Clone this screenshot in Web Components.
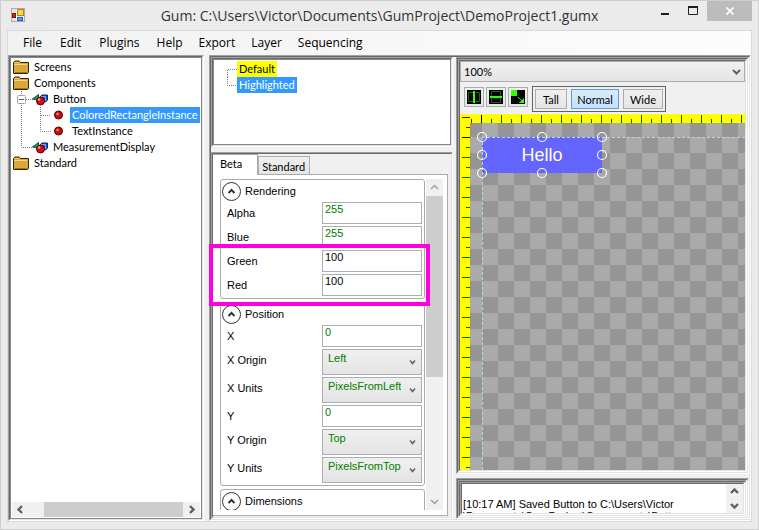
<!DOCTYPE html>
<html lang="en">
<head>
<meta charset="utf-8">
<title>Gum</title>
<style>
  html, body { height: 100%; }
  body { margin: 0; font: 11px/13px "Liberation Sans", Arial, sans-serif; color: #000; --ui: Lato, "Liberation Sans", sans-serif; }
</style>
</head>
<body>
<gum-app></gum-app>

<script>
const define = (name, css, html) => {
  const tpl = document.createElement('template');
  customElements.define(name, class extends HTMLElement {
    constructor() {
      super();
      const root = this.attachShadow({ mode: 'open' });
      tpl.innerHTML = `<style>*{box-sizing:border-box}button,input,select{font:inherit;color:inherit;margin:0;border-radius:0}${css}</style>` +
        (typeof html === 'function' ? '' : html);
      root.append(tpl.content.cloneNode(true));
    }
    connectedCallback() {
      if (this.ready) return;
      this.ready = true;
      if (typeof html === 'function') this.shadowRoot.innerHTML += html(this);
    }
  });
};
const attr = (el, name) => el.getAttribute(name) || '';

/* Sunken 3D edge, two pixels on each side */
define('sunken-frame', `
  :host { display: flex; min-width: 0; min-height: 0; border: 1px solid; border-color: #a0a0a0 #fff #fff #a0a0a0; }
  .in { flex: 1; display: flex; flex-direction: column; min-width: 0; min-height: 0; border: 1px solid; border-color: #696969 #e3e3e3 #e3e3e3 #696969; }
  ::slotted(*) { flex: 1; }
`, `<div class="in"><slot></slot></div>`);

define('title-bar', `
  :host { display: grid; grid-template-columns: 1fr auto 1fr; height: 30px; flex: none; background: #ebebeb; }
  .icon { margin: 7px 0 0 10px; }
  h1 { margin: 0; font: 14px/29px "Open Sans", "Noto Sans", sans-serif; color: #333; white-space: nowrap; }
  .ctl { display: flex; justify-content: flex-end; height: 20px; padding-right: 6px; }
  button { border: 0; padding: 0; background: none; width: 28px; display: grid; place-items: center; }
  button.close { width: 45px; background: #bcbcbc; }
  svg { display: block; }
`, `
  <svg class="icon" width="14" height="14">
    <rect x=".5" y=".5" width="13" height="13" fill="#e4e6ea" stroke="#aaa"/>
    <path d="M5.5 1V13M1 9.5H13" stroke="#fff"/>
    <rect x="6.5" y="1.500" width="6" height="6" fill="#ffd24a" stroke="#b8860b"/>
    <rect x="1.500" y="5.500" width="3" height="4" fill="#d42a1e" stroke="#8c1008"/>
    <rect x="6.500" y="9.500" width="5" height="3" fill="#5c9cff" stroke="#2a5fc4"/>
  </svg>
  <h1>Gum: C:\\Users\\Victor\\Documents\\GumProject\\DemoProject1.gumx</h1>
  <div class="ctl">
    <button aria-label="Minimize"><svg width="10" height="10"><path d="M1 8H9" stroke="#1e1e1e" stroke-width="2"/></svg></button>
    <button aria-label="Maximize"><svg width="10" height="10"><path d="M0 1H10" stroke="#1e1e1e" stroke-width="2"/><path d="M.5 1V8.500H9.500V1" fill="none" stroke="#1e1e1e"/></svg></button>
    <button class="close" aria-label="Close"><svg width="8" height="8"><path d="M.5.5L7.500 7.500M7.500.5L.5 7.500" stroke="#fff" stroke-width="1.600"/></svg></button>
  </div>
`);

define('menu-bar', `
  :host { display: flex; flex: none; height: 24px; padding-left: 6px; background: linear-gradient(90deg, #f1f1f1, #fdfdfd); }
  button { border: 0; background: none; padding: 0 9px; font: 12px/22px "Open Sans", "Noto Sans", sans-serif; }
  button:nth-child(n+5) { padding: 0 8px; }
`, `${['File', 'Edit', 'Plugins', 'Help', 'Export', 'Layer', 'Sequencing'].map(t => `<button>${t}</button>`).join('')}`);

const parts = {
  folder: `<path d="M1.500 14.500V3.500L3 2H7L8.500 3.500H16.500V13.500L15.500 14.500Z" fill="#d9a83a" stroke="#3a2204"/><path d="M2 5.500H15" stroke="#f6d67a"/><path d="M3 3.500H7" stroke="#f0c860"/><path d="M3 13.500H15.500" stroke="#a66d14"/>`,
  shapes: `<path d="M20.500 8L26.500 3.500V9Z" fill="#1fa074" stroke="#0c4a38"/><path d="M28.500 5.500L30 4H35.500V9L33.500 11H28.500Z" fill="#1b5fd6" stroke="#0a1f66"/><path d="M29 5.500H33.500V10" stroke="#6aa5ff" fill="none"/><circle cx="28.500" cy="10" r="4" fill="#d01010" stroke="#4d0000"/><circle cx="27" cy="8.500" r="1.200" fill="#ff9a9a"/>`,
  gem: `<circle cx="46.500" cy="8" r="4" fill="#c40f0f" stroke="#500000"/><circle cx="45.500" cy="7" r="1.200" fill="#ff8a8a"/>`
};
const dots = d => `<path d="${d}" stroke="#808080" stroke-dasharray="1 1" fill="none"/>`;
const art = {
  folder: [20, parts.folder],
  component: [39, dots('M9.500 0V16M14 8.500H21') + `<rect x="5.500" y="4.500" width="8" height="8" rx="1" fill="#fff" stroke="#a0a0a0"/><path d="M7 8.500H12" stroke="#3b5aa5"/>` + parts.shapes],
  last: [39, dots('M9.500 0V8.500H21') + parts.shapes],
  member: [58, dots('M9.500 0V16M28.500 0V16M29 8.500H39') + parts.gem],
  memberlast: [58, dots('M9.500 0V16M28.500 0V8.500H39') + parts.gem],
  state: [23, dots('M13.500 16V8.500H23')],
  statelast: [23, dots('M13.500 0V8.500H23')]
};
define('tree-row', `
  :host { display: flex; height: 16px; font: 11px/16px var(--ui); }
  svg { flex: none; display: block; }
  span { padding: 0 2px; white-space: nowrap; }
  :host([selected]) span { background: #3399ff; color: #fff; }
  :host([marked]) span { background: #ff0; }
`, el => {
  const [w, s] = art[attr(el, 'kind')];
  return `<svg width="${w}" height="16" aria-hidden="true">${s}</svg><span role="treeitem"><slot></slot></span>`;
});

const chev = {
  up: 'M1 6L4.500 2.500L8 6', down: 'M1 3L4.500 6.500L8 3',
  left: 'M6 1L2.500 4.500L6 8', right: 'M3 1L6.500 4.500L3 8',
  small: 'M2 3.500L4.500 6.500L7 3.500', toggle: 'M1.500 6L4.500 3L7.500 6'
};
const arrow = (dir, color, w = 2) => `<svg width="9" height="9"><path d="${chev[dir]}" fill="none" stroke="${color}" stroke-width="${w}"/></svg>`;

/* Scroll bar: start / thumb / end are flex shares of the track */
define('scroll-bar', `
  :host { display: flex; flex: none; min-height: 0; background: #f0f0f0; }
  :host([vertical]) { flex-direction: column; width: 17px; }
  :host(:not([vertical])) { height: 15px; }
  button { border: 0; padding: 0; background: none; display: grid; place-items: center; flex: 0 1 17px; min-height: 0; }
  i { background: #cdcdcd; }
  svg { display: block; }
`, el => {
  const v = el.hasAttribute('vertical');
  const [a, t, b] = attr(el, 'track').split(' ');
  const c = attr(el, 'tone') || '#606060', w = c === '#606060' ? 2.4 : 1.5;
  return `<button aria-label="Back">${arrow(v ? 'up' : 'left', c, w)}</button><b style="flex:${a}"></b><i style="flex:${t}"></i><b style="flex:${b}"></b><button aria-label="Forward">${arrow(v ? 'down' : 'right', c, w)}</button>`;
});

define('project-tree', `
  :host { display: flex; flex-direction: column; min-height: 0; border: 1px solid #828790; background: #fff; padding: 1px; }
  .rows { flex: 1; min-height: 0; overflow: hidden; }
`, `
  <div class="rows" role="tree">
    <tree-row kind="folder">Screens</tree-row>
    <tree-row kind="folder">Components</tree-row>
    <tree-row kind="component">Button</tree-row>
    <tree-row kind="member" selected>ColoredRectangleInstance</tree-row>
    <tree-row kind="memberlast">TextInstance</tree-row>
    <tree-row kind="last">MeasurementDisplay</tree-row>
    <tree-row kind="folder">Standard</tree-row>
  </div>
  <scroll-bar track="15 139 0"></scroll-bar>
`);

define('state-list', `
  :host { display: block; border: 1px solid #828790; background: #fff; padding: 1px 0; overflow: hidden; }
`, `
  <div role="tree">
    <tree-row kind="state" marked>Default</tree-row>
    <tree-row kind="statelast" selected>Highlighted</tree-row>
  </div>
`);

define('prop-row', `
  :host { display: grid; grid-template-columns: 95fr 100fr; align-items: center; color: #000; }
  .field { position: relative; display: block; color: #008000; }
  :host([edited]) .field { color: #000; }
  :host([choice]) label { padding-bottom: 4px; }
  input, select { display: block; width: 100%; border: 1px solid #abadb3; line-height: 13px; outline: 0; }
  input { height: 22px; padding: 0 2px 8px; background: #fff; }
  select { appearance: none; height: 26px; padding: 0 20px 8px 5px; background: linear-gradient(#f0f0f0, #e4e4e4); overflow: hidden; text-overflow: clip; }
  svg { position: absolute; right: 5px; top: 8px; pointer-events: none; }
`, el => {
  const v = attr(el, 'value');
  return `<label for="f">${attr(el, 'label')}</label><span class="field">` +
    (el.hasAttribute('choice')
      ? `<select id="f"><option>${v}</option></select>${arrow('small', '#606060', 1.5)}`
      : `<input id="f" value="${v}">`) + `</span>`;
});

define('prop-group', `
  :host { display: block; border: 1px solid #a9abb0; border-radius: 3px; padding: 0 2px 2px 6px; background: #fff; }
  header { display: flex; align-items: center; gap: 4px; height: 22px; margin-left: -5px; }
  button { width: 19px; height: 19px; padding: 0; border: 1px solid #333; border-radius: 50%; background: #fff; display: grid; place-items: center; }
  .rows { display: grid; gap: 2px; }
  svg { display: block; }
`, el => `<header><button aria-label="Toggle ${attr(el, 'name')}">${arrow('toggle', '#333', 2)}</button><span>${attr(el, 'name')}</span></header><div class="rows"><slot></slot></div>`);

define('property-panel', `
  :host { display: flex; flex-direction: column; min-height: 0; position: relative; background: #f0f0f0; padding-right: 3px; }
  .tabs { display: flex; align-items: flex-end; height: 20px; flex: none; font-family: var(--ui); }
  .tabs button { border: 1px solid #acacac; border-bottom: 0; background: linear-gradient(#f0f0f0, #e5e5e5); height: 18px; padding: 1px 4px 0 3px; }
  .tabs button.on { background: #fff; height: 21px; margin-bottom: -1px; padding: 0 15px 3px 7px; border-left: 0; z-index: 1; }
  .page { flex: 1; min-height: 0; display: flex; border: 1px solid #acacac; border-left: 0; background: #fff; padding: 4px 4px 5px 7px; margin-bottom: 1px; }
  .list { flex: 1; min-width: 0; overflow: hidden; display: flex; flex-direction: column; gap: 3px; padding-right: 1px; }
  .list > * { flex: none; }
  .list > :last-child { min-height: 60px; }
  .callout { position: absolute; left: -4px; top: 90px; width: calc(100% - 17px); height: 62px; border: 4px solid #ff00dc; pointer-events: none; }
`, `
  <div class="tabs" role="tablist"><button class="on" role="tab">Beta</button><button role="tab">Standard</button></div>
  <div class="page">
    <div class="list">
      <prop-group name="Rendering">
        <prop-row label="Alpha" value="255"></prop-row>
        <prop-row label="Blue" value="255"></prop-row>
        <prop-row label="Green" value="100" edited></prop-row>
        <prop-row label="Red" value="100" edited></prop-row>
      </prop-group>
      <prop-group name="Position">
        <prop-row label="X" value="0"></prop-row>
        <prop-row label="X Origin" value="Left" choice></prop-row>
        <prop-row label="X Units" value="PixelsFromLeft" choice></prop-row>
        <prop-row label="Y" value="0"></prop-row>
        <prop-row label="Y Origin" value="Top" choice></prop-row>
        <prop-row label="Y Units" value="PixelsFromTop" choice></prop-row>
      </prop-group>
      <prop-group name="Dimensions"></prop-group>
    </div>
    <scroll-bar vertical track="0 182 117" tone="#a0a0a0"></scroll-bar>
  </div>
  <div class="callout"></div>
`);

define('zoom-select', `
  :host { display: block; position: relative; flex: none; font-family: var(--ui); }
  select { appearance: none; display: block; width: 100%; height: 21px; border: 1px solid #acacac; padding: 0 20px 0 3px; background: linear-gradient(#f0f0f0, #e5e5e5); }
  svg { position: absolute; right: 4px; top: 6px; pointer-events: none; }
`, `<select aria-label="Zoom"><option>100%</option></select>${arrow('down', '#606060', 2)}`);

define('canvas-tools', `
  :host { display: flex; flex: none; height: 32px; padding: 4px 4px 2px; gap: 2px; background: #f0f0f0; font-family: var(--ui); }
  button { border: 1px solid #acacac; background: linear-gradient(#f0f0f0, #e5e5e5); padding: 0; }
  .ic { width: 20px; height: 20px; margin-top: 1px; display: grid; place-items: center; }
  .ic svg { display: block; background: #000; }
  .sizes { display: flex; gap: 4px; border: 1px solid #646464; height: 26px; padding: 2px; margin-left: 2px; }
  .sizes button { padding: 0 3px; flex: 0 0 32px; }
  .sizes button:last-child { flex-basis: 40px; }
  .sizes button.on { flex-basis: 48px; border-color: #569de5; background: linear-gradient(#dbecfc, #c4e0fc); }
`, `
  <button class="ic" aria-label="Fit height"><svg width="14" height="14"><path d="M1.500 2.500H12.500V11.500H1.500Z" fill="none" stroke="#1c6a00"/><path d="M7 1V13" stroke="#3f0" stroke-width="2"/></svg></button>
  <button class="ic" aria-label="Fit width"><svg width="14" height="14"><path d="M2.500 1.500H11.500V12.500H2.500Z" fill="none" stroke="#1c6a00"/><path d="M1 7H13" stroke="#3f0" stroke-width="2"/></svg></button>
  <button class="ic" aria-label="Resize"><svg width="14" height="14"><path d="M0 0H6V6H0Z" fill="#3f0"/><path d="M7 7L11 11" stroke="#3f0"/><path d="M13 8V13H8Z" fill="#3f0"/></svg></button>
  <div class="sizes"><button>Tall</button><button class="on">Normal</button><button>Wide</button></div>
`);

/* Design surface: origin of the edited component is (22, 23) */
define('design-canvas', `
  :host { display: block; flex: 1; min-height: 0; overflow: hidden; font-size: 18px; background: #959595; }
  svg { display: block; width: 100%; height: 100%; }
`, () => {
  const hs = [[22, 23], [82, 23], [142, 23], [22, 41], [142, 41], [22, 59], [82, 59], [142, 59]];
  return `<svg>
    <defs>
      <pattern id="ck" x="22" y="23" width="32" height="32" patternUnits="userSpaceOnUse"><rect width="32" height="32" fill="#959595"/><path d="M16 0H32V16H16ZM0 16H16V32H0Z" fill="#aaa"/></pattern>
      <pattern id="rt" x="21" y="0" width="20" height="9" patternUnits="userSpaceOnUse"><path d="M.5 1V9M10.500 5V9" stroke="#006400"/></pattern>
      <pattern id="rl" x="0" y="23" width="10" height="20" patternUnits="userSpaceOnUse"><path d="M2 .5H10M6 10.500H10" stroke="#006400"/></pattern>
    </defs>
    <rect width="100%" height="100%" fill="url(#ck)"/>
    <rect x="22" y="23" width="120" height="36" fill="#6464ff"/>
    <path d="M22 23.500H4000M22.500 23V4000" stroke="#add8e6" stroke-dasharray="3 2"/>
    <text x="82" y="47" text-anchor="middle" fill="#fff">Hello</text>
    <g fill="none" stroke="#fff" stroke-width="1.200">${hs.map(([x, y]) => `<circle cx="${x}" cy="${y}" r="4.500"/>`).join('')}</g>
    <rect width="100%" height="9" fill="#ff0"/><rect width="10" height="100%" fill="#ff0"/>
    <rect x="21" width="100%" height="9" fill="url(#rt)"/><rect y="23" width="10" height="100%" fill="url(#rl)"/>
    <path d="M11.500 5V9M2 3.500H10M6 13.500H10" stroke="#8b0000"/>
    <path d="M21.500 1V9M2 23.500H10" stroke="#000"/>
  </svg>`;
});

define('output-log', `
  :host { display: flex; min-height: 0; background: #fff; }
  div { flex: 1; min-width: 0; overflow: hidden; padding: 14px 0 0 1px; white-space: nowrap; }
  p { margin: 0; line-height: 12px; }
`, `<div role="log"><p>[10:17 AM] Saved Button to C:\\Users\\Victor</p><p>\\Documents\\GumProject\\Components\\Button.gucx</p></div><scroll-bar vertical track="1 0 0"></scroll-bar>`);

define('gum-app', `
  :host { display: flex; flex-direction: column; height: 100vh; box-sizing: border-box; border: 1px solid #cfcfcf; background: #ebebeb; }
  .client { flex: 1; min-height: 0; display: flex; flex-direction: column; margin: -1px 6px 7px; border: 1px solid #dadada; background: #f0f0f0; }
  .work { flex: 1; min-height: 0; display: grid; grid-template-columns: 196fr 542fr; gap: 5px; }
  .split { display: grid; grid-template-columns: 242fr 293fr; gap: 3px; min-height: 0; }
  .mid, .right { display: grid; min-width: 0; min-height: 0; }
  .mid { grid-template-rows: 90px minmax(0, 1fr); gap: 5px; }
  .right { grid-template-rows: minmax(0, 1fr) 41px; gap: 4px; }
  .editor { display: flex; flex-direction: column; min-height: 0; }
`, `
  <title-bar></title-bar>
  <div class="client">
    <menu-bar></menu-bar>
    <div class="work">
      <sunken-frame><project-tree></project-tree></sunken-frame>
      <sunken-frame><div class="split">
        <div class="mid">
          <sunken-frame><state-list></state-list></sunken-frame>
          <sunken-frame><property-panel></property-panel></sunken-frame>
        </div>
        <div class="right">
          <sunken-frame><sunken-frame><div class="editor">
            <zoom-select></zoom-select><canvas-tools></canvas-tools><design-canvas></design-canvas>
          </div></sunken-frame></sunken-frame>
          <sunken-frame><sunken-frame><sunken-frame><output-log></output-log></sunken-frame></sunken-frame></sunken-frame>
        </div>
      </div></sunken-frame>
    </div>
  </div>
`);
</script>
</body>
</html>
